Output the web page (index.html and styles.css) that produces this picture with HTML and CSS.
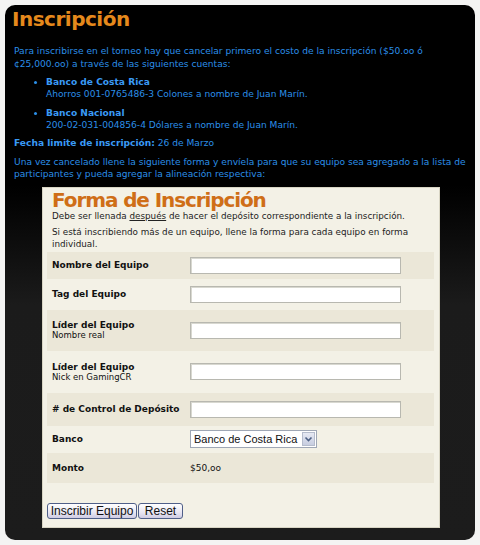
FILE: index.html
```html
<!DOCTYPE html>
<html lang="es">
<head>
<meta charset="utf-8">
<title>Inscripción</title>
<link rel="stylesheet" href="styles.css">
</head>
<body>
<div class="panel">
  <h1 class="title">Inscripción</h1>
  <p class="info">Para inscribirse en el torneo hay que cancelar primero el costo de la inscripción ($50.oo ó ¢25,000.oo) a través de las siguientes cuentas:</p>
  <ul class="banks">
    <li><b>Banco de Costa Rica</b><br>Ahorros 001-0765486-3 Colones a nombre de Juan Marín.</li>
    <li><b>Banco Nacional</b><br>200-02-031-004856-4 Dólares a nombre de Juan Marín.</li>
  </ul>
  <p class="info"><b>Fecha limite de inscripción:</b> 26 de Marzo</p>
  <p class="info">Una vez cancelado llene la siguiente forma y envíela para que su equipo sea agregado a la lista de participantes y pueda agregar la alineación respectiva:</p>

  <form class="form">
    <h2 class="form-title">Forma de Inscripción</h2>
    <p class="note">Debe ser llenada <u>después</u> de hacer el depósito correspondiente a la inscripción.</p>
    <p class="note">Si está inscribiendo más de un equipo, llene la forma para cada equipo en forma individual.</p>
    <div class="table">
      <div class="row dark"><div class="label"><b>Nombre del Equipo</b></div><input class="field" type="text"></div>
      <div class="row"><div class="label"><b>Tag del Equipo</b></div><input class="field" type="text"></div>
      <div class="row dark"><div class="label"><b>Líder del Equipo</b><br>Nombre real</div><input class="field" type="text"></div>
      <div class="row"><div class="label"><b>Líder del Equipo</b><br>Nick en GamingCR</div><input class="field" type="text"></div>
      <div class="row dark"><div class="label"><b># de Control de Depósito</b></div><input class="field" type="text"></div>
      <div class="row"><div class="label"><b>Banco</b></div>
        <div class="select"><span class="select-text">Banco de Costa Rica</span><span class="select-btn"><svg width="9" height="7" viewBox="0 0 9 7"><path d="M1.5 1.5 L4.5 4.5 L7.5 1.5" fill="none" stroke="#4d6185" stroke-width="1.6"/></svg></span></div>
      </div>
      <div class="row dark"><div class="label"><b>Monto</b></div><div class="amount">$50,oo</div></div>
    </div>
    <div class="buttons">
      <button type="button" class="btn btn-submit">Inscribir Equipo</button>
      <button type="button" class="btn btn-reset">Reset</button>
    </div>
  </form>
</div>
</body>
</html>
```

FILE: styles.css
```css
html, body {
  margin: 0;
  padding: 0;
  background: #f4f4f3;
}
body {
  padding: 5px;
  font-family: "DejaVu Sans", Verdana, sans-serif;
}
.panel {
  width: 470px;
  height: 535px;
  box-sizing: border-box;
  border-radius: 10px;
  background: linear-gradient(#000 0, #000 180px, #1b1b1b 300px, #1c1c1c 100%);
  padding: 3px 0 0 9px;
  overflow: hidden;
}
.title {
  margin: 0 0 0 -2px;
  font-size: 20px;
  line-height: 22px;
  letter-spacing: -0.5px;
  font-weight: bold;
  color: #e5891c;
}
.info {
  margin: 15px 0 0 0;
  font-size: 9.1px;
  line-height: 12.5px;
  color: #2b8fe8;
  width: 452px;
}
.info b, .banks b { color: #3a9af5; }
.info + .info { margin-top: 6px; }
.banks + .info { margin-top: 6px; }
.banks {
  margin: 6px 0 0 0;
  padding: 0 0 0 32px;
  font-size: 9.1px;
  line-height: 12px;
  color: #2b8fe8;
}
.banks li + li { margin-top: 7px; }
.form {
  margin: 6px 0 0 28px;
  width: 398px;
  height: 341px;
  box-sizing: border-box;
  background: #f3f1e6;
  border: 1px solid #d8d5c4;
  padding: 2px 0 0 0;
}
.form-title {
  margin: 0 0 0 9px;
  font-size: 20px;
  line-height: 20px;
  letter-spacing: -1.1px;
  font-weight: bold;
  color: #cf6e17;
}
.note {
  margin: 0 0 0 9px;
  font-size: 8.8px;
  line-height: 12px;
  color: #222;
  width: 380px;
}
.note + .note { margin-top: 4px; }
.table {
  margin: 2px 0 0 4px;
  width: 387px;
  display: grid;
  grid-template-rows: 27px 31px 41px 42px 33px 27px 30px;
}
.row {
  display: flex;
  align-items: center;
  font-size: 8.5px;
  line-height: 10px;
  color: #111;
}
.row.dark { background: #ebe7d8; }
.label {
  width: 138px;
  padding-left: 5px;
  flex: none;
}
.label b { font-size: 9px; }
.field {
  width: 211px;
  height: 17px;
  box-sizing: border-box;
  margin: 0;
  border: 1px solid #b8b8b0;
  box-shadow: inset 1px 1px 0 #d8d8d0;
  background: #fff;
  padding: 0;
}
.select {
  width: 127px;
  height: 18px;
  box-sizing: border-box;
  border: 1px solid #9fa7b5;
  background: #fff;
  display: flex;
  align-items: center;
  justify-content: space-between;
  padding: 0 1px 0 3px;
  white-space: nowrap;
}
.select-text {
  font-family: "Liberation Sans", Arial, sans-serif;
  font-size: 11px;
  line-height: 14px;
  color: #111;
}
.select-btn {
  width: 13px;
  height: 14px;
  flex: none;
  box-sizing: border-box;
  border: 1px solid #b5bccc;
  background: linear-gradient(#e6e9f3, #c7cde0);
  display: flex;
  align-items: center;
  justify-content: center;
}
.amount { font-size: 9px; }
.buttons {
  margin: 20px 0 0 4px;
  display: flex;
  gap: 1px;
}
.btn {
  height: 16px;
  box-sizing: border-box;
  padding: 0;
  font-family: "Liberation Sans", Arial, sans-serif;
  font-size: 12px;
  line-height: 14px;
  color: #111;
  border: 1px solid #4f5f88;
  border-radius: 3px;
  background: linear-gradient(#ffffff, #e8e6f2 60%, #cfcce3);
  white-space: nowrap;
}
.btn-submit { width: 90px; }
.btn-reset { width: 45px; }
```
